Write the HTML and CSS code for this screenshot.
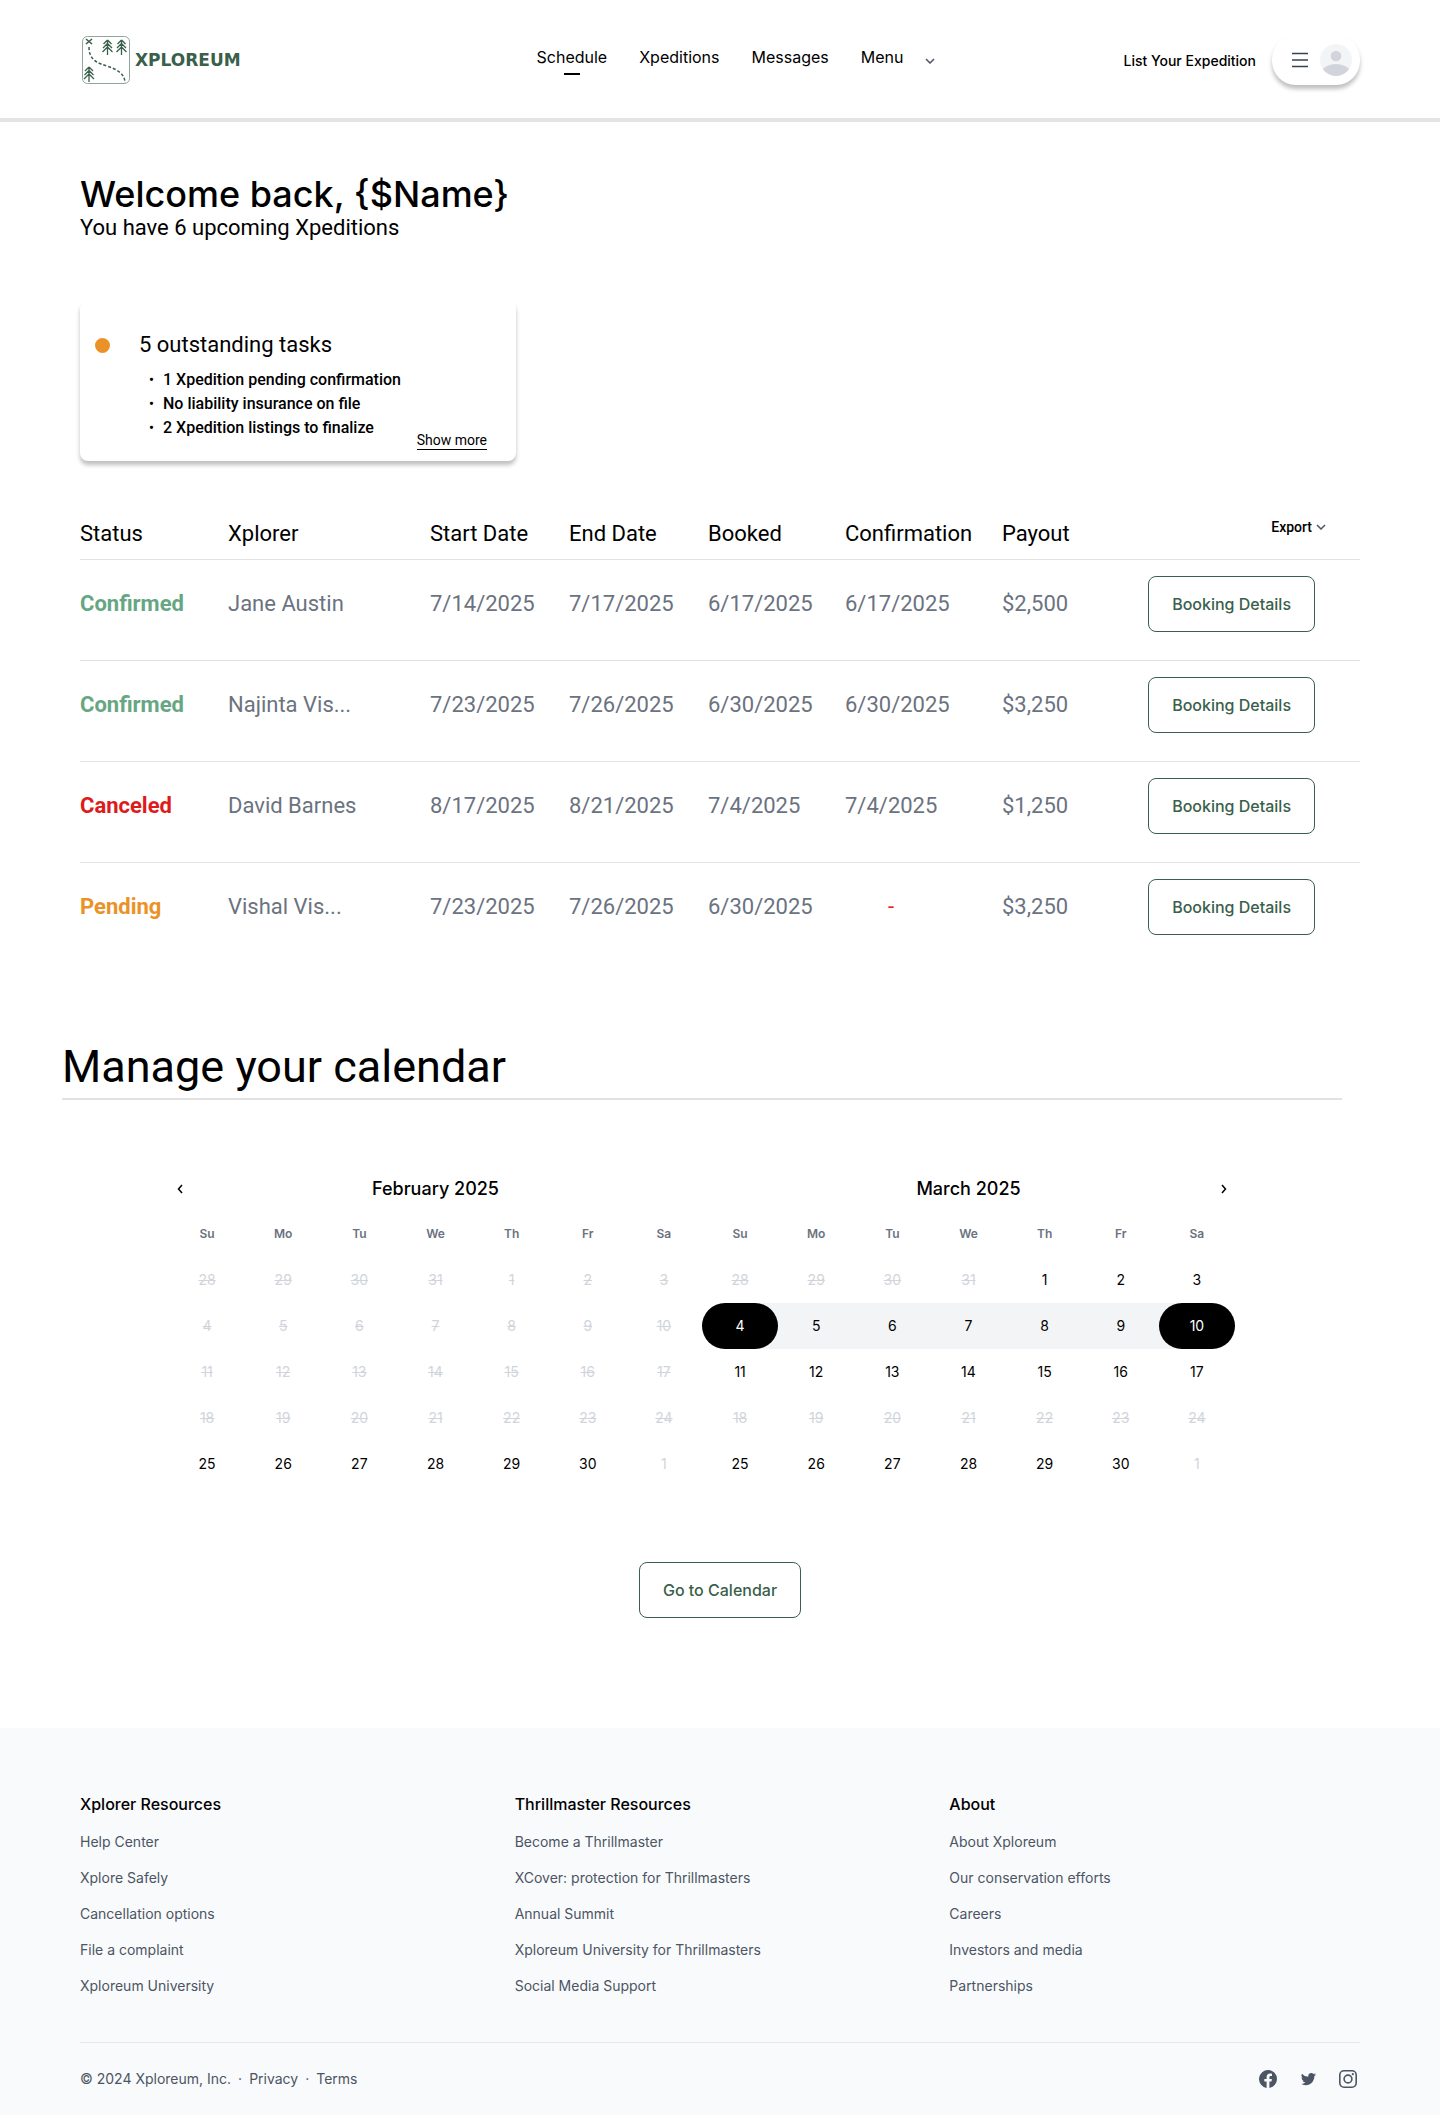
FILE: index.html
```html
<!DOCTYPE html>
<html lang="en">
<head>
    <meta charset="UTF-8">
    <meta name="viewport" content="width=device-width, initial-scale=1.0">
    <title>Xploreum - Schedule</title>
    <link rel="stylesheet" href="styles.css">
</head>
<body>

<header class="header">
    <a href="#" class="logo">
        <svg width="48" height="48" viewBox="0 0 48 48" fill="none" stroke="#3a5f4b">
            <rect x="0.5" y="0.5" width="47" height="47" rx="5" stroke="#8fa698"/>
            <path d="M4 3l6 5M10 3l-6 5" stroke-width="1.6"/>
            <path d="M7 11c0 9 4 14 12 17s24 6 24 19" stroke-width="1.5" stroke-dasharray="3 2"/>
            <g id="tree" stroke-width="1.3">
                <path d="M25.500 4v15M25.500 4l-4 4M25.500 4l4 4M25.500 7.500l-4.500 4.500M25.500 7.500l4.500 4.500M25.500 11l-5 5M25.500 11l5 5"/>
            </g>
            <use href="#tree" x="14"/>
            <use href="#tree" x="-18.500" y="27"/>
        </svg>
        <span>XPLOREUM</span>
    </a>

    <nav class="nav">
        <a href="#" class="active">Schedule</a>
        <a href="#">Xpeditions</a>
        <a href="#">Messages</a>
        <a href="#" class="nav-menu">Menu
            <svg width="10" height="6" viewBox="0 0 10 6" fill="none" stroke="#4b5563" stroke-width="1.5"><path d="M1 1l4 4 4-4"/></svg>
        </a>
    </nav>

    <div class="header-right">
        <a href="#">List Your Expedition</a>
        <button class="profile" aria-label="Account menu">
            <svg width="16" height="16" viewBox="0 0 16 16" stroke="#374151" stroke-width="1.5"><path d="M0 1.500h16M0 8h16M0 14.500h16"/></svg>
            <svg width="32" height="32" viewBox="0 0 32 32">
                <clipPath id="avatar"><circle cx="16" cy="16" r="16"/></clipPath>
                <circle cx="16" cy="16" r="16" fill="#f3f4f6"/>
                <g fill="#d1d5db" clip-path="url(#avatar)">
                    <circle cx="16" cy="12" r="5.300"/>
                    <ellipse cx="16" cy="32" rx="16" ry="12"/>
                </g>
            </svg>
        </button>
    </div>
</header>

<main>
    <section class="welcome">
        <h1>Welcome back, {$Name}</h1>
        <p>You have 6 upcoming Xpeditions</p>
    </section>

    <section class="tasks">
        <span class="tasks-dot"></span>
        <div class="tasks-body">
            <h2>5 outstanding tasks</h2>
            <ul>
                <li>1 Xpedition pending confirmation</li>
                <li>No liability insurance on file</li>
                <li>2 Xpedition listings to finalize</li>
            </ul>
        </div>
        <a href="#" class="show-more">Show more</a>
    </section>

    <table class="bookings">
        <colgroup>
            <col class="col-status">
            <col class="col-name">
            <col class="col-date">
            <col class="col-date">
            <col class="col-booked">
            <col class="col-confirmation">
            <col class="col-payout">
            <col>
        </colgroup>
        <thead>
            <tr>
                <th>Status</th>
                <th>Xplorer</th>
                <th>Start Date</th>
                <th>End Date</th>
                <th>Booked</th>
                <th>Confirmation</th>
                <th>Payout</th>
                <th class="export-cell">
                    <button class="export">Export
                        <svg width="10" height="6" viewBox="0 0 10 6" fill="none" stroke="#4b5563" stroke-width="1.5"><path d="M1 1l4 4 4-4"/></svg>
                    </button>
                </th>
            </tr>
        </thead>
        <tbody>
            <tr>
                <td class="confirmed">Confirmed</td>
                <td>Jane Austin</td>
                <td>7/14/2025</td>
                <td>7/17/2025</td>
                <td>6/17/2025</td>
                <td>6/17/2025</td>
                <td>$2,500</td>
                <td class="action"><button class="btn">Booking Details</button></td>
            </tr>
            <tr>
                <td class="confirmed">Confirmed</td>
                <td>Najinta Vis...</td>
                <td>7/23/2025</td>
                <td>7/26/2025</td>
                <td>6/30/2025</td>
                <td>6/30/2025</td>
                <td>$3,250</td>
                <td class="action"><button class="btn">Booking Details</button></td>
            </tr>
            <tr>
                <td class="canceled">Canceled</td>
                <td>David Barnes</td>
                <td>8/17/2025</td>
                <td>8/21/2025</td>
                <td>7/4/2025</td>
                <td>7/4/2025</td>
                <td>$1,250</td>
                <td class="action"><button class="btn">Booking Details</button></td>
            </tr>
            <tr>
                <td class="pending">Pending</td>
                <td>Vishal Vis...</td>
                <td>7/23/2025</td>
                <td>7/26/2025</td>
                <td>6/30/2025</td>
                <td class="no-date">-</td>
                <td>$3,250</td>
                <td class="action"><button class="btn">Booking Details</button></td>
            </tr>
        </tbody>
    </table>

    <section class="manage">
        <h2>Manage your calendar</h2>

        <div class="calendars">
            <div class="month">
                <div class="month-header">
                    <button aria-label="Previous month"><svg width="6" height="10" viewBox="0 0 6 10" fill="none" stroke="#000" stroke-width="1.5"><path d="M5 1L1.500 5 5 9"/></svg></button>
                    <h3>February 2025</h3>
                </div>
                <table>
                    <thead>
                        <tr><th>Su</th><th>Mo</th><th>Tu</th><th>We</th><th>Th</th><th>Fr</th><th>Sa</th></tr>
                    </thead>
                    <tbody>
                        <tr class="off"><td>28</td><td>29</td><td>30</td><td>31</td><td>1</td><td>2</td><td>3</td></tr>
                        <tr class="off"><td>4</td><td>5</td><td>6</td><td>7</td><td>8</td><td>9</td><td>10</td></tr>
                        <tr class="off"><td>11</td><td>12</td><td>13</td><td>14</td><td>15</td><td>16</td><td>17</td></tr>
                        <tr class="off"><td>18</td><td>19</td><td>20</td><td>21</td><td>22</td><td>23</td><td>24</td></tr>
                        <tr><td>25</td><td>26</td><td>27</td><td>28</td><td>29</td><td>30</td><td class="next">1</td></tr>
                    </tbody>
                </table>
            </div>

            <div class="month">
                <div class="month-header">
                    <h3>March 2025</h3>
                    <button aria-label="Next month"><svg width="6" height="10" viewBox="0 0 6 10" fill="none" stroke="#000" stroke-width="1.5"><path d="M1 1l3.500 4L1 9"/></svg></button>
                </div>
                <table>
                    <thead>
                        <tr><th>Su</th><th>Mo</th><th>Tu</th><th>We</th><th>Th</th><th>Fr</th><th>Sa</th></tr>
                    </thead>
                    <tbody>
                        <tr><td class="off">28</td><td class="off">29</td><td class="off">30</td><td class="off">31</td><td>1</td><td>2</td><td>3</td></tr>
                        <tr class="range"><td class="range-start"><span>4</span></td><td>5</td><td>6</td><td>7</td><td>8</td><td>9</td><td class="range-end"><span>10</span></td></tr>
                        <tr><td>11</td><td>12</td><td>13</td><td>14</td><td>15</td><td>16</td><td>17</td></tr>
                        <tr class="off"><td>18</td><td>19</td><td>20</td><td>21</td><td>22</td><td>23</td><td>24</td></tr>
                        <tr><td>25</td><td>26</td><td>27</td><td>28</td><td>29</td><td>30</td><td class="next">1</td></tr>
                    </tbody>
                </table>
            </div>
        </div>
    </section>

    <div class="go-calendar">
        <button class="btn">Go to Calendar</button>
    </div>
</main>

<footer class="footer">
    <div class="footer-links">
        <div>
            <h4>Xplorer Resources</h4>
            <a href="#">Help Center</a>
            <a href="#">Xplore Safely</a>
            <a href="#">Cancellation options</a>
            <a href="#">File a complaint</a>
            <a href="#">Xploreum University</a>
        </div>
        <div>
            <h4>Thrillmaster Resources</h4>
            <a href="#">Become a Thrillmaster</a>
            <a href="#">XCover: protection for Thrillmasters</a>
            <a href="#">Annual Summit</a>
            <a href="#">Xploreum University for Thrillmasters</a>
            <a href="#">Social Media Support</a>
        </div>
        <div>
            <h4>About</h4>
            <a href="#">About Xploreum</a>
            <a href="#">Our conservation efforts</a>
            <a href="#">Careers</a>
            <a href="#">Investors and media</a>
            <a href="#">Partnerships</a>
        </div>
    </div>

    <div class="footer-bottom">
        <div class="legal">
            <span>© 2024 Xploreum, Inc.</span>
            <span>·</span>
            <a href="#">Privacy</a>
            <span>·</span>
            <a href="#">Terms</a>
        </div>
        <div class="social">
            <a href="#" aria-label="Facebook">
                <svg width="24" height="24" viewBox="0 0 24 24" fill="#4b5563"><path d="M21 12a9 9 0 1 0-10.400 8.900v-6.300H8.300V12h2.300v-2c0-2.250 1.340-3.500 3.400-3.500.98 0 2 .18 2 .18v2.200h-1.130c-1.120 0-1.470.7-1.470 1.400V12h2.500l-.4 2.600h-2.100v6.300A9 9 0 0 0 21 12z"/></svg>
            </a>
            <a href="#" aria-label="Twitter">
                <svg width="24" height="24" viewBox="0 0 24 24" fill="#4b5563"><path d="M20 7.500a6.200 6.200 0 0 1-1.800.5 3.100 3.100 0 0 0 1.350-1.700 6.200 6.200 0 0 1-1.950.75A3.080 3.080 0 0 0 12.300 9.850 8.700 8.700 0 0 1 5.970 6.640a3.080 3.080 0 0 0 .95 4.100 3 3 0 0 1-1.400-.38v.04a3.080 3.080 0 0 0 2.470 3.010 3.100 3.100 0 0 1-1.390.05 3.080 3.080 0 0 0 2.870 2.130A6.200 6.200 0 0 1 4.900 16.870a8.700 8.700 0 0 0 4.710 1.380c5.650 0 8.740-4.680 8.740-8.740v-.4A6.300 6.300 0 0 0 20 7.500z"/></svg>
            </a>
            <a href="#" aria-label="Instagram">
                <svg width="24" height="24" viewBox="0 0 24 24" fill="none" stroke="#4b5563" stroke-width="1.6"><rect x="3.800" y="3.800" width="16.400" height="16.400" rx="4.200"/><circle cx="12" cy="12" r="3.900"/><circle cx="16.800" cy="7.200" r="1.100" fill="#4b5563" stroke="none"/></svg>
            </a>
        </div>
    </div>
</footer>

</body>
</html>
```
FILE: styles.css
```css
* {
    box-sizing: border-box;
}

body {
    font-family: Inter, "Liberation Sans", sans-serif;
    margin: 0;
    background-color: white;
    color: #000;
}

h1, h2, h3, h4, p, ul {
    margin: 0;
    padding: 0;
}

a {
    color: inherit;
    text-decoration: none;
}

button {
    font-family: inherit;
    color: inherit;
    background: none;
    border: none;
    padding: 0;
    cursor: pointer;
}

svg {
    display: block;
}

/* Header */
.header {
    display: grid;
    grid-template-columns: 1fr auto 1fr;
    align-items: center;
    height: 122px;
    padding: 2px 80px 0 82px;
    border-bottom: 4px solid #e4e4e4;
}

.logo {
    display: flex;
    align-items: center;
    gap: 5px;
    color: #3a5f4b;
    font-family: "DejaVu Sans", sans-serif;
    font-size: 17px;
    font-weight: bold;
}

.nav {
    display: flex;
    gap: 32px;
    padding-left: 30px;
    font-size: 16px;
    line-height: 24px;
}

.nav .active::after {
    content: "";
    display: block;
    width: 16px;
    height: 2px;
    margin: 4px auto 0;
    background-color: #000;
}

.nav-menu {
    display: flex;
    gap: 22px;
}

.nav-menu svg {
    margin-top: 13px;
}

.header-right {
    display: flex;
    justify-content: flex-end;
    align-items: center;
    gap: 16px;
    font-size: 14px;
    font-weight: 500;
}

.profile {
    display: flex;
    align-items: center;
    gap: 12px;
    padding: 9px 8px 9px 20px;
    border-radius: 24px;
    background-color: white;
    box-shadow: 0 4px 4px rgba(0, 0, 0, 0.25);
}

/* Welcome */
main {
    padding: 50px 80px 110px;
}

.welcome h1 {
    font-size: 36px;
    font-weight: 500;
    line-height: 44px;
}

.welcome p {
    font-family: Roboto, sans-serif;
    font-size: 22px;
    line-height: 24px;
}

/* Tasks card */
.tasks {
    display: flex;
    gap: 29px;
    width: 436px;
    margin-top: 61px;
    padding: 30px 29px 11px 15px;
    border-radius: 8px;
    background-color: white;
    box-shadow: 0 4px 4px rgba(0, 0, 0, 0.25);
    font-family: Roboto, sans-serif;
}

.tasks-dot {
    width: 15px;
    height: 15px;
    margin-top: 7px;
    border-radius: 50%;
    background-color: #ea9227;
}

.tasks-body {
    flex-grow: 1;
    padding-bottom: 10px;
}

.tasks h2 {
    font-size: 22px;
    font-weight: 400;
    line-height: 28px;
    margin-bottom: 9px;
}

.tasks ul {
    padding-left: 24px;
    font-size: 16px;
    font-weight: 500;
    line-height: 24px;
    list-style: none;
}

.tasks li {
    white-space: nowrap;
}

.tasks li::before {
    content: "•";
    display: inline-block;
    width: 14px;
    margin-left: -14px;
    font-size: 14px;
}

.show-more {
    align-self: flex-end;
    margin-left: -100px;
    border-bottom: 1px solid #000;
    font-size: 14px;
    line-height: 18px;
}

/* Bookings */
.bookings {
    width: 100%;
    margin-top: 54px;
    border-collapse: collapse;
    table-layout: fixed;
    font-family: Roboto, sans-serif;
    font-size: 22px;
    line-height: 28px;
    color: #6b7280;
}

.col-status {
    width: 148px;
}

.col-name {
    width: 202px;
}

.col-date {
    width: 139px;
}

.col-booked {
    width: 137px;
}

.col-confirmation {
    width: 157px;
}

.col-payout {
    width: 146px;
}

.bookings th {
    height: 44px;
    padding: 0 0 11px;
    color: #000;
    font-weight: 400;
    text-align: left;
    vertical-align: bottom;
}

.bookings td {
    height: 101px;
    padding: 16px 0 27px;
    border-top: 1px solid #e2e2e2;
}

.bookings .confirmed {
    color: #66a683;
    font-weight: 700;
}

.bookings .canceled {
    color: #dc1c1c;
    font-weight: 700;
}

.bookings .pending {
    color: #ea9227;
    font-weight: 700;
}

.bookings .no-date {
    padding-left: 43px;
    color: #f02020;
}

.bookings .export-cell {
    padding-right: 34px;
    line-height: 20px;
    text-align: right;
    vertical-align: top;
}

.export {
    display: inline-flex;
    align-items: center;
    gap: 4px;
    font-family: Roboto, sans-serif;
    font-size: 14px;
    font-weight: 500;
    line-height: 20px;
}

.bookings .action {
    padding-right: 45px;
    text-align: right;
}

.btn {
    padding: 15px 23px;
    border: 1px solid #3a5f4b;
    border-radius: 8px;
    color: #3a5f4b;
    font-family: Inter, sans-serif;
    font-size: 16px;
    font-weight: 500;
    line-height: 24px;
}

.btn:hover {
    background-color: #f3f7f4;
}

/* Calendar */
.manage {
    margin: 78px 18px 0 -18px;
}

.manage h2 {
    padding-bottom: 5px;
    border-bottom: 2px solid #e2e2e2;
    font-family: Roboto, sans-serif;
    font-size: 45px;
    font-weight: 400;
    line-height: 52px;
}

.calendars {
    display: flex;
    padding: 75px 107px 0;
}

.month {
    flex: 1;
}

.month-header {
    position: relative;
    text-align: center;
}

.month-header h3 {
    font-size: 18px;
    font-weight: 500;
    line-height: 28px;
}

.month-header button {
    position: absolute;
    top: 9px;
}

.month:first-child button {
    left: 8px;
}

.month:last-child button {
    right: 8px;
}

.month table {
    width: 100%;
    margin-top: 8px;
    border-collapse: collapse;
    table-layout: fixed;
    text-align: center;
    font-size: 14px;
    line-height: 20px;
}

.month th {
    height: 46px;
    padding: 0;
    color: #6b7280;
    font-size: 12px;
    font-weight: 600;
}

.month td {
    height: 46px;
    padding: 0;
}

.month .off, .month .next {
    color: #d1d5db;
}

tr.off td, td.off {
    text-decoration: line-through;
}

.range td {
    background-color: #f3f4f6;
}

.range .range-start {
    border-radius: 23px 0 0 23px;
}

.range .range-end {
    border-radius: 0 23px 23px 0;
}

.range span {
    display: block;
    border-radius: 23px;
    background-color: #000;
    color: white;
    line-height: 46px;
}

.go-calendar {
    margin-top: 75px;
    text-align: center;
}

/* Footer */
.footer {
    margin-bottom: 11px;
    padding: 64px 80px 24px;
    background-color: #f9fafc;
    color: #4b5563;
    font-size: 14px;
    line-height: 24px;
}

.footer-links {
    display: grid;
    grid-template-columns: repeat(3, 1fr);
    gap: 24px;
    padding-bottom: 32px;
    border-bottom: 1px solid #e5e7eb;
}

.footer-links h4 {
    margin-bottom: 14px;
    color: #000;
    font-size: 16px;
    font-weight: 500;
}

.footer-links a {
    display: block;
    margin-bottom: 12px;
}

.footer-bottom {
    display: flex;
    justify-content: space-between;
    padding-top: 24px;
}

.legal {
    display: flex;
    gap: 7px;
}

.social {
    display: flex;
    gap: 16px;
}
```
